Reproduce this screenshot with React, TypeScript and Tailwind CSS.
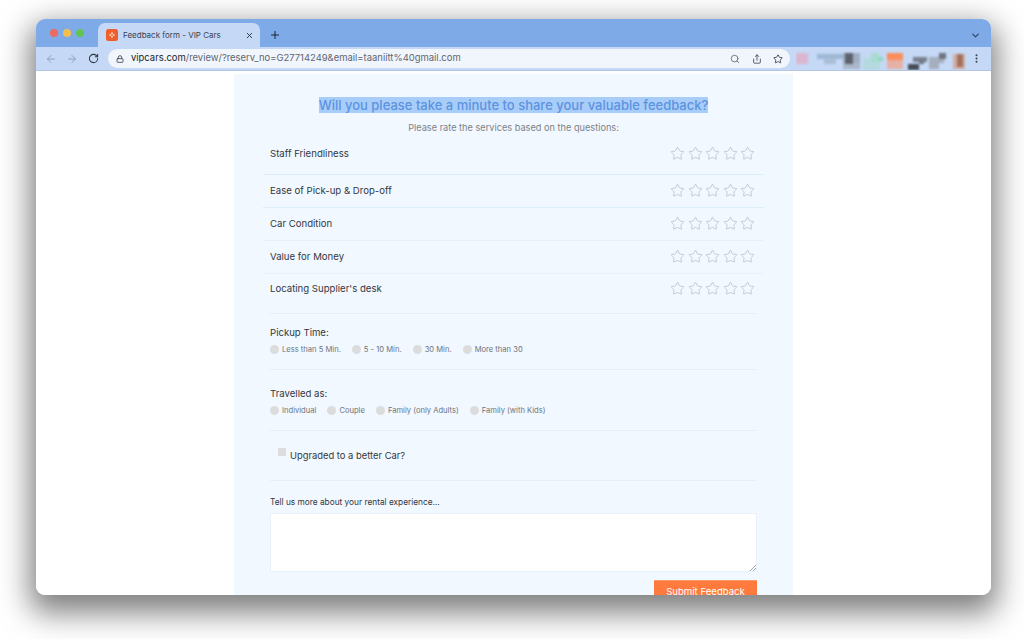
import React from 'react';
import { ArrowLeft, ArrowRight, RotateCw, Lock, Search, Share, Star, X, Plus, ChevronDown, EllipsisVertical } from 'lucide-react';

const ratings = [
  { label: 'Staff Friendliness', rowClass: 'h-[42px]' },
  { label: 'Ease of Pick-up & Drop-off', rowClass: 'h-[33px] pb-[2px]' },
  { label: 'Car Condition', rowClass: 'h-[33px] pb-[2px]' },
  { label: 'Value for Money', rowClass: 'h-[33px] pb-[2px]' },
  { label: "Locating Supplier's desk", rowClass: 'h-[33px] pb-[4px]' },
];

function Stars() {
  return (
    <div className="flex gap-[2.5px] mr-[1px]">
      {[0, 1, 2, 3, 4].map((i) => (
        <Star key={i} size={15} strokeWidth={1.4} className="text-[#bfc3cb]" />
      ))}
    </div>
  );
}

function Radio({ label }: { label: string }) {
  return (
    <span className="flex items-center gap-[3px]">
      <span className="w-[9px] h-[9px] -mt-[1px] rounded-full bg-[#dcdcdc]" />
      <span className="mr-[1px]">{label}</span>
    </span>
  );
}

function Favicon() {
  return (
    <svg width="12" height="12" viewBox="0 0 12 12" className="ml-[1px] shrink-0">
      <rect width="12" height="12" rx="2.5" fill="#ee5f2c" />
      <path d="M6 2.5 7.2 5 9.5 6 7.2 7 6 9.5 4.8 7 2.5 6 4.8 5Z" fill="#fbd9c6" />
      <circle cx="6" cy="6" r="1" fill="#ee5f2c" />
    </svg>
  );
}

function BlurredExtensions() {
  return (
    <svg width="172" height="22" viewBox="0 0 172 22" className="shrink-0">
      <g style={{ filter: 'blur(1px)' }}>
        <rect x="0" y="5" width="12" height="11" fill="#dcb6cf" />
        <rect x="21" y="6" width="26" height="5" fill="#9db7d6" />
        <rect x="28" y="10" width="12" height="6" fill="#a9bfd6" />
        <rect x="47" y="5" width="17" height="11" fill="#a0aec2" />
        <rect x="47" y="15" width="17" height="6" fill="#aab8ca" />
        <rect x="49" y="5" width="8" height="11" fill="#5d636e" />
        <rect x="67" y="10" width="17" height="12" fill="#b4dadf" />
        <rect x="75" y="5" width="8" height="9" fill="#a9dccf" />
        <rect x="82" y="9" width="5" height="4" fill="#8ed8c6" />
        <rect x="91" y="5" width="16" height="8" fill="#fb8e5c" />
        <rect x="91" y="12" width="16" height="9" fill="#e5b1a5" />
        <rect x="112" y="16" width="11" height="6" fill="#474b55" />
        <rect x="117" y="9" width="14" height="5" fill="#79818f" />
        <rect x="123" y="13" width="5" height="3" fill="#6c7480" />
        <rect x="133" y="9" width="10" height="12" fill="#a5afbd" />
        <rect x="143" y="5" width="7" height="6" fill="#6d7480" />
        <rect x="143" y="11" width="5" height="4" fill="#a5afbd" />
        <rect x="157" y="6" width="12" height="15" fill="#cfaea4" />
        <rect x="161" y="6" width="6" height="13" fill="#a4705c" />
      </g>
    </svg>
  );
}

export default function App() {
  return (
    <div className="w-[1024px] h-[639px] bg-white overflow-hidden pt-[19px] pl-[36px]" style={{ fontFamily: 'Inter, "Noto Sans", sans-serif' }}>
      <div className="w-[955px] h-[576px] rounded-[9px] overflow-hidden flex flex-col bg-white shadow-[0_12px_30px_6px_rgba(0,0,0,0.5)]">
        {/* Tab strip */}
        <div className="h-[28px] shrink-0 bg-[#7eaae8] flex items-end pl-[14px] pr-[10px]">
          <div className="flex gap-[5px] h-full items-center pr-[9px]">
            <span className="w-[8px] h-[8px] rounded-full bg-[#ec6a5e]" />
            <span className="w-[8px] h-[8px] rounded-full bg-[#f4bf4f]" />
            <span className="w-[8px] h-[8px] rounded-full bg-[#61c554]" />
          </div>
          <div className="w-[162px] h-[24px] ml-[5px] rounded-t-[7px] bg-[#c5d8f5] flex items-center pl-[7px] pr-[6px] gap-[5px]">
            <Favicon />
            <span className="text-[8px] text-[#3c4350] flex-1 whitespace-nowrap">Feedback form - VIP Cars</span>
            <X size={9} strokeWidth={2.4} className="text-[#2c3340]" />
          </div>
          <div className="h-[24px] flex items-center ml-[9px]">
            <Plus size={12} strokeWidth={2} className="text-[#1c2330]" />
          </div>
          <div className="flex-1" />
          <div className="h-[28px] flex items-center pt-[4px]">
            <ChevronDown size={11} strokeWidth={2.4} className="text-[#2f3f5f]" />
          </div>
        </div>

        {/* Toolbar */}
        <div className="h-[24px] shrink-0 bg-[#c5d8f5] border-b border-b-[#b4c6e2] flex items-center pl-[9px] pr-[9px]">
          <ArrowLeft size={12} strokeWidth={1.8} className="text-[#8b9cb6]" />
          <ArrowRight size={12} strokeWidth={1.8} className="ml-[9px] text-[#8b9cb6]" />
          <RotateCw size={11} strokeWidth={2.2} className="ml-[10px] text-[#2f3744]" />
          <div className="ml-[9px] w-[682px] h-[19px] rounded-full bg-[#f1f5fc] flex items-center pl-[8px] pr-[7px]">
            <Lock size={8} strokeWidth={2.5} className="text-[#3c4350]" />
            <span className="ml-[7px] text-[9.45px] whitespace-nowrap text-[#5f6672]">
              <span className="text-[#20252e]">vipcars.com</span>/review/?reserv_no=G27714249&amp;email=taaniitt%40gmail.com
            </span>
            <div className="flex-1" />
            <Search size={10} strokeWidth={2} className="text-[#5f6672]" />
            <Share size={10} strokeWidth={2} className="ml-[12px] text-[#3c4350]" />
            <Star size={10} strokeWidth={2} className="ml-[11px] text-[#2f3744]" />
          </div>
          <div className="ml-[6px]">
            <BlurredExtensions />
          </div>
          <div className="flex-1" />
          <EllipsisVertical size={11} strokeWidth={2.4} className="text-[#3c4350]" />
        </div>

        {/* Page */}
        <div className="flex-1 min-h-0 overflow-hidden bg-white pl-[198px]">
          <div className="w-[559px] h-full mt-[3px] bg-[#f1f8ff] pt-[23px]">
            <div className="text-center text-[13px] leading-[16px] text-[#5c93e0]">
              <span className="bg-[#a9cdf9] font-medium">Will you please take a minute to share your valuable feedback?</span>
            </div>
            <p className="mt-[9px] text-center text-[9.2px] leading-[11px] text-[#7d8288]">
              Please rate the services based on the questions:
            </p>

            <div className="mx-[29px]">
              {ratings.map((row, i) => (
                <div
                  key={row.label}
                  className={`flex items-center justify-between pl-[7px] pr-[8px] ${row.rowClass} ${i < 2 ? 'border-b border-b-[#ddeefb]' : i < 4 ? 'border-b border-b-[#e8f1fa]' : ''}`}
                >
                  <span className={`text-[9.6px] text-[#33373d] ${i < 4 ? 'mt-[2px]' : 'mt-[2px]'}`}>{row.label}</span>
                  <Stars />
                </div>
              ))}
            </div>

            <div className="mx-[36px]">
              <div className="border-t border-t-[#e6eef6] mt-[6px] pt-[12px] h-[56px]">
                <div className="text-[9.6px] leading-[13px] text-[#33373d]">Pickup Time:</div>
                <div className="flex gap-[10px] mt-[6px] text-[7.6px] leading-[10px] text-[#6f747c]">
                  <Radio label="Less than 5 Min." />
                  <Radio label="5 - 10 Min." />
                  <Radio label="30 Min." />
                  <Radio label="More than 30" />
                </div>
              </div>
              <div className="border-t border-t-[#e6eef6] pt-[17px] h-[61px]">
                <div className="text-[9.6px] leading-[13px] text-[#33373d]">Travelled as:</div>
                <div className="flex gap-[10px] mt-[6px] text-[7.6px] leading-[10px] text-[#6f747c]">
                  <Radio label="Individual" />
                  <Radio label="Couple" />
                  <Radio label="Family (only Adults)" />
                  <Radio label="Family (with Kids)" />
                </div>
              </div>
              <div className="border-t border-t-[#e6eef6] h-[50px] pl-[8px] pt-[17px] flex items-start gap-[4px]">
                <span className="w-[8px] h-[8px] rounded-[1px] bg-[#dcdcdc] shrink-0" />
                <span className="text-[9.4px] leading-[13px] mt-[1px] text-[#33373d]">Upgraded to a better Car?</span>
              </div>
              <div className="border-t border-t-[#e6eef6] pt-[16px]">
                <div className="text-[8.3px] leading-[11px] text-[#33373d]">Tell us more about your rental experience...</div>
                <div className="relative mt-[5px] h-[59px] bg-white border border-[#e8f1f9]">
                  <svg width="7" height="7" viewBox="0 0 7 7" className="absolute right-0 bottom-0">
                    <path d="M1 7 7 1M4 7 7 4" stroke="#8a8a8a" strokeWidth="0.8" />
                  </svg>
                </div>
                <div className="flex justify-end mt-[8px]">
                  <button className="w-[103px] h-[22px] bg-[#ff7a3d] border-t border-t-[#ff9a6c] text-white text-[9.6px] leading-[12px] text-center">
                    Submit Feedback
                  </button>
                </div>
              </div>
            </div>
          </div>
        </div>
      </div>
    </div>
  );
}
